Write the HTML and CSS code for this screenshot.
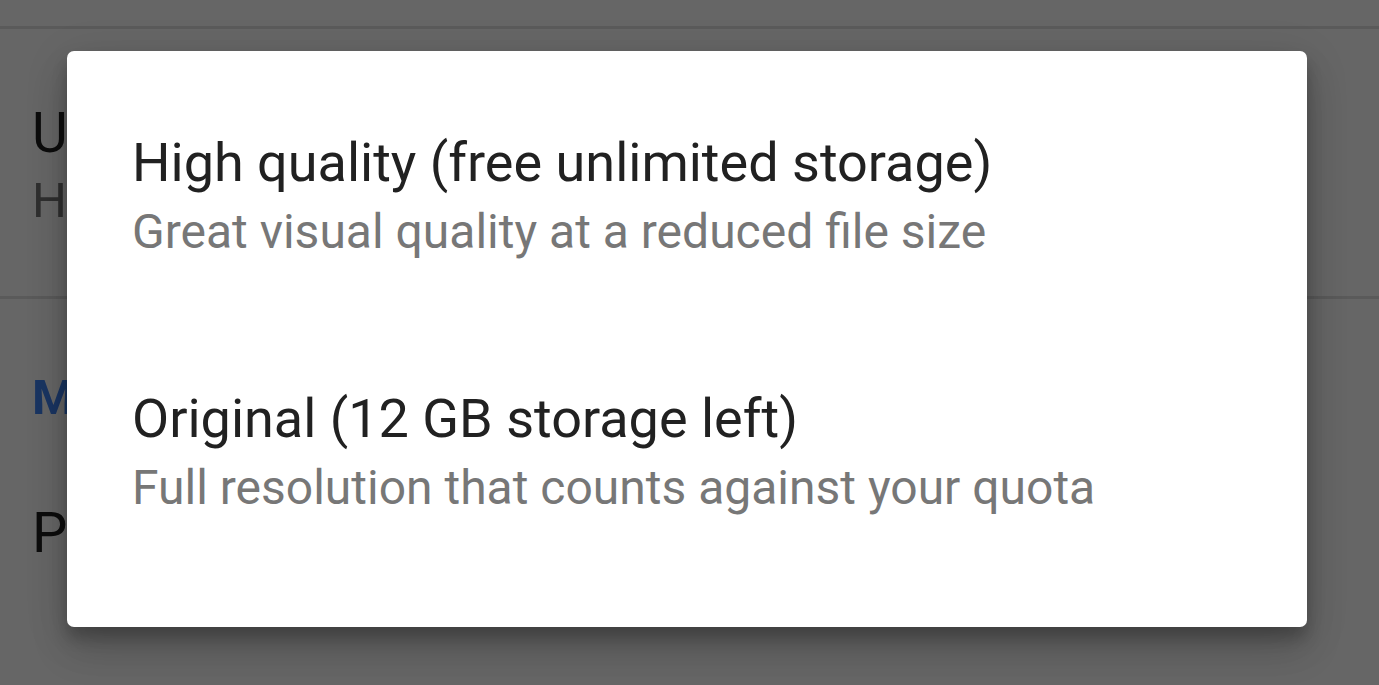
FILE: index.html
```html
<!DOCTYPE html>
<html>
<head>
<meta charset="utf-8">
<link rel="stylesheet" href="styles.css">
</head>
<body>
<div class="page">
  <div class="toolbar"></div>
  <div class="row">
    <div class="row-title">Upload size</div>
    <div class="row-sub">High quality</div>
  </div>
  <div class="section">
    <div class="section-head">Mobile data usage</div>
    <div class="row2">Photos</div>
  </div>
</div>
<div class="scrim"></div>
<div class="dialog">
  <div class="option">
    <div class="opt-title">High quality (free unlimited storage)</div>
    <div class="opt-sub">Great visual quality at a reduced file size</div>
  </div>
  <div class="option">
    <div class="opt-title">Original (12 GB storage left)</div>
    <div class="opt-sub">Full resolution that counts against your quota</div>
  </div>
</div>
</body>
</html>
```
FILE: styles.css
```css
html, body {
  margin: 0;
  padding: 0;
  width: 1379px;
  height: 685px;
  overflow: hidden;
  font-family: Roboto, "Noto Sans", sans-serif;
}
.page {
  background: #ffffff;
  height: 685px;
}
.toolbar {
  height: 26px;
  border-bottom: 3px solid #e2e2e2;
}
.row {
  padding: 71px 0 60px 32px;
  border-bottom: 3px solid #e2e2e2;
}
.row-title {
  font-size: 55px;
  line-height: 66px;
  color: #212121;
}
.row-sub {
  font-size: 49px;
  line-height: 70px;
  color: #777777;
}
.section {
  padding-left: 32px;
}
.section-head {
  padding-top: 66px;
  font-size: 49px;
  font-weight: 700;
  color: #4285f4;
  line-height: 66px;
}
.row2 {
  padding-top: 69px;
  font-size: 56px;
  line-height: 66px;
  color: #212121;
}
.scrim {
  position: absolute;
  inset: 0;
  background: rgba(0, 0, 0, 0.6);
}
.dialog {
  position: absolute;
  left: 67px;
  top: 51px;
  width: 1240px;
  height: 576px;
  background: #ffffff;
  border-radius: 7px;
  box-shadow: 0 24px 38px rgba(0,0,0,0.14), 0 9px 46px rgba(0,0,0,0.12), 0 11px 15px rgba(0,0,0,0.2);
  padding: 79px 65px 0;
  box-sizing: border-box;
  display: flex;
  flex-direction: column;
  gap: 118px;
}
.opt-title {
  font-size: 54px;
  line-height: 66px;
  color: #212121;
}
.opt-sub {
  font-size: 48px;
  line-height: 72px;
  color: #777777;
}
```
